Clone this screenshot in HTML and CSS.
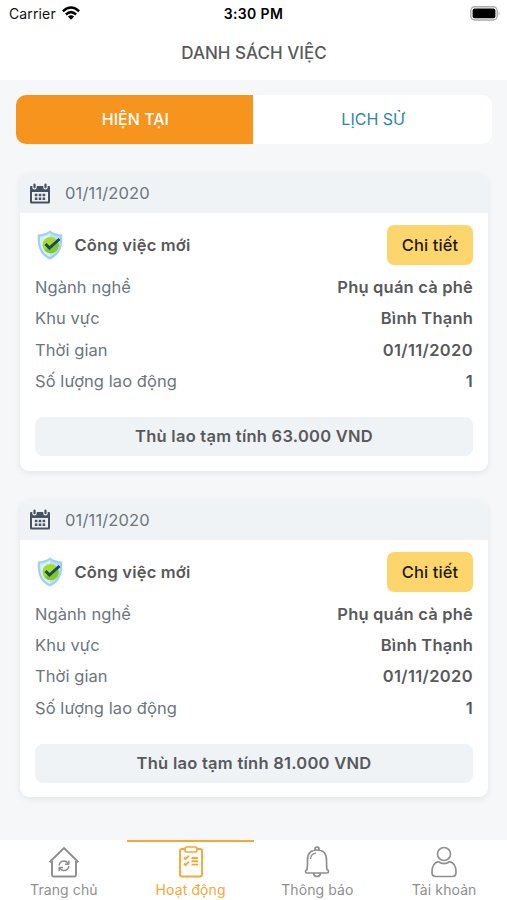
FILE: index.html
```html
<!DOCTYPE html>
<html lang="vi">
<head>
<meta charset="utf-8">
<meta name="viewport" content="width=device-width, initial-scale=1">
<title>Danh sách việc</title>
<link rel="stylesheet" href="styles.css">
</head>
<body>
<svg class="symbols" aria-hidden="true">
  <symbol id="calendar" viewBox="0 0 20 21">
    <path fill="#46525f" fill-rule="evenodd" d="M1 3H2.300V4.500Q2.300 6.500 4.500 6.500Q6.700 6.500 6.700 4.500V3H13.300V4.500Q13.300 6.500 15.500 6.500Q17.700 6.500 17.700 4.500V3H19Q20 3 20 4V19Q20 20.500 18.500 20.500H1.500Q0 20.500 0 19V4Q0 3 1 3ZM2 9V18.500H18V9Z"/>
    <path stroke="#46525f" stroke-width="2.200" stroke-linecap="round" d="M4.500 1.500V4.200M15.500 1.500V4.200"/>
    <path stroke="#46525f" stroke-width="2.600" stroke-dasharray="2.600 1.300" d="M4.800 12H15.200M4.800 15.800H15.200"/>
  </symbol>
  <symbol id="shield" viewBox="0 0 26 30">
    <path fill="#9bd2f5" d="M13 .5C10 3 5.500 4.300 .800 4.500C.200 15 2 25 13 29.500C24 25 25.800 15 25.200 4.500C20.500 4.300 16 3 13 .5Z"/>
    <path fill="#d9effb" d="M13 3C10 5.200 6.500 6.300 3 6.500C2.700 15 4 23 13 27Z"/>
    <path fill="#bce2f7" d="M13 3C16 5.200 19.500 6.300 23 6.500C23.300 15 22 23 13 27Z"/>
    <circle cx="13.500" cy="15" r="8" fill="#a5dc2c"/>
    <path fill="#86c625" d="M20.500 11A8 8 0 0 1 7.500 20.300Z"/>
    <path fill="none" stroke="#164a63" stroke-width="3" d="M8.500 14L12.500 18L22.500 9"/>
  </symbol>
</svg>
<div class="screen">
  <header class="top">
    <div class="status">
      <div class="carrier"><span>Carrier</span>
        <svg width="18" height="14" viewBox="0 0 18 14" fill="none" stroke="#000" stroke-width="2.500"><path d="M.900 5.300Q9-2.300 17.100 5.300M3.900 8.500Q9 3.800 14.100 8.500"/><path fill="#000" stroke="none" d="M5.900 10.600Q9 8 12.100 10.600L9 13.800Z"/></svg>
      </div>
      <div class="clock">3:30 PM</div>
      <svg class="battery" width="31" height="15" viewBox="0 0 31 15"><rect x=".8" y=".8" width="26.400" height="13.200" rx="4" fill="#fff" stroke="#aaa" stroke-width="1.400"/><rect x="2.600" y="2.600" width="22.800" height="9.600" rx="2" fill="#000"/><path d="M28.600 5Q30.500 7.400 28.600 9.800Z" fill="#aaa"/></svg>
    </div>
    <h1><span>DANH SÁCH VIỆC</span></h1>
  </header>
  <main>
    <div class="tabs"><div class="tab active"><span>HIỆN TẠI</span></div><div class="tab"><span>LỊCH SỬ</span></div></div>
    <article class="card">
      <div class="date"><svg width="20" height="21"><use href="#calendar"/></svg><span>01/11/2020</span></div>
      <div class="body">
        <div class="title"><svg width="26" height="30"><use href="#shield"/></svg><strong>Công việc mới</strong><button>Chi tiết</button></div>
        <dl>
          <div><dt>Ngành nghề</dt><dd>Phụ quán cà phê</dd></div>
          <div><dt>Khu vực</dt><dd>Bình Thạnh</dd></div>
          <div><dt>Thời gian</dt><dd class="digits">01/11/2020</dd></div>
          <div><dt>Số lượng lao động</dt><dd>1</dd></div>
        </dl>
        <div class="pay"><span>Thù lao tạm tính 63.000 VND</span></div>
      </div>
    </article>
    <article class="card">
      <div class="date"><svg width="20" height="21"><use href="#calendar"/></svg><span>01/11/2020</span></div>
      <div class="body">
        <div class="title"><svg width="26" height="30"><use href="#shield"/></svg><strong>Công việc mới</strong><button>Chi tiết</button></div>
        <dl>
          <div><dt>Ngành nghề</dt><dd>Phụ quán cà phê</dd></div>
          <div><dt>Khu vực</dt><dd>Bình Thạnh</dd></div>
          <div><dt>Thời gian</dt><dd class="digits">01/11/2020</dd></div>
          <div><dt>Số lượng lao động</dt><dd>1</dd></div>
        </dl>
        <div class="pay"><span>Thù lao tạm tính 81.000 VND</span></div>
      </div>
    </article>
  </main>
  <nav>
    <div class="item">
      <svg width="32" height="32" viewBox="0 0 32 32"><path stroke-width="1.900" d="M4 15V29Q4 30.500 5.500 30.500H26.500Q28 30.500 28 29V15M1.500 16.300L16 2L30.500 16.300"/><path d="M11 19.500Q12 15 16 15Q19 15 20.500 18M20.800 14.500V18.300H17M21 20Q20 24.500 16 24.500Q13 24.500 11.500 21.800M11.200 25.300V21.500H15"/></svg>
      <span>Trang chủ</span>
    </div>
    <div class="item active">
      <svg width="32" height="32" viewBox="0 0 32 32"><path stroke-width="1.900" d="M10 3H7Q5 3 5 5V28.500Q5 30.500 7 30.500H25Q27 30.500 27 28.500V5Q27 3 25 3H22"/><rect x="10" y="1" width="12" height="5" rx="1.500" stroke-width="1.700"/><path stroke-width="1.900" d="M9 11.500L10.500 13.200L13.800 9.700M9 17.500L10.500 19.200L13.800 15.700M16.500 12H23M16.500 15.300H23M16.500 18.600H23"/></svg>
      <span>Hoạt động</span>
    </div>
    <div class="item">
      <svg width="32" height="32" viewBox="0 0 32 32"><path stroke-width="1.700" d="M14 4V2.800Q14 1.200 16 1.200Q18 1.200 18 2.800V4M6 23.500Q6.500 21 6.500 14Q6.500 4 16 4Q25.500 4 25.500 14Q25.500 21 26 23.500Q27.500 24 27.500 25.500Q27.500 27 26 27H6Q4.500 27 4.500 25.500Q4.500 24 6 23.500ZM12.500 27.300Q13 30.500 16 30.500Q19 30.500 19.500 27.300"/><path stroke-width="1.200" d="M9.500 13Q10 7.700 15 7.200"/></svg>
      <span>Thông báo</span>
    </div>
    <div class="item">
      <svg width="32" height="32" viewBox="0 0 32 32"><circle cx="16" cy="8" r="6.500" stroke-width="1.700"/><path stroke-width="1.700" d="M10.500 15.700Q4 17 4 26.500Q4 30.500 8 30.500H24Q28 30.500 28 26.500Q28 17 21.500 15.700Q16 19.500 10.500 15.700Z"/></svg>
      <span>Tài khoản</span>
    </div>
  </nav>
</div>
</body>
</html>
```
FILE: styles.css
```css
* { box-sizing: border-box; }
body { margin: 0; font-family: Inter, "Liberation Sans", sans-serif; font-size: 16.5px; color: #58595b; background: #f5f7f9; white-space: nowrap; }
.symbols { display: none; }
.screen { height: 900px; display: flex; flex-direction: column; overflow: hidden; }
.top { height: 80px; background: #fff; flex: none; }
.status { height: 27px; display: grid; grid-template-columns: 1fr auto 1fr; align-items: center; padding: 0 6px 0 9px; color: #111; font-size: 14px; }
.carrier { display: flex; align-items: center; gap: 6px; letter-spacing: .13px; }
.carrier svg { margin-top: -2px; }
.clock { font-weight: 600; color: #000; font-size: 14px; letter-spacing: .35px; margin-right: 3px; }
.battery { justify-self: end; }
h1 { margin: 0; height: 52px; display: flex; align-items: center; justify-content: center; font-size: 17px; font-weight: 500; letter-spacing: .03px; padding-left: 1px; }
main { flex: 1; min-height: 0; padding: 15px 15px 0; }
.tabs { display: flex; height: 49px; margin: 0 0 29px .5px; border-radius: 10px; overflow: hidden; background: #fff; font-size: 16px; padding-right: 1px; }
.tab { flex: 1; display: flex; align-items: center; justify-content: center; color: #2c87aa; padding: 0 0 1px 2px; }
.tab.active { background: #f7941d; color: #fff; font-weight: 500; }
.card { width: 468px; margin: 0 0 29px 5px; border-radius: 9px; box-shadow: 0 2px 6px rgba(60, 80, 90, .09); overflow: hidden; background: #fff; }
.date { height: 40px; display: flex; align-items: center; gap: 15px; padding-left: 10px; background: #eff3f6; color: #6d767d; letter-spacing: .15px; }
.body { height: 257.500px; padding: 12px 15px 14.500px; display: flex; flex-direction: column; }
.title { height: 40px; display: flex; align-items: center; }
strong { margin-left: 11.500px; font-weight: 600; letter-spacing: .2px; }
.title svg { margin-left: 2px; }
button { margin-left: auto; width: 86px; height: 40px; padding: 0; border: 0; border-radius: 7px; background: #fdd56d; color: #1e1a10; font: 500 16.5px Inter, sans-serif; letter-spacing: .1px; }
dl { margin: 6.400px 0 0; }
dl div { height: 31.4px; display: flex; align-items: center; justify-content: space-between; }
dt { color: #6d767d; letter-spacing: .07px; }
dd { margin: 0; font-weight: 600; letter-spacing: .2px; }
.digits { letter-spacing: .36px; }
.pay { margin-top: auto; height: 39px; display: flex; align-items: center; justify-content: center; border-radius: 8px; background: #eff3f6; font-weight: 600; letter-spacing: .26px; padding-bottom: 1px; }
nav { flex: none; height: 60px; display: grid; grid-template-columns: repeat(4, 1fr); background: #fff; }
.item { display: flex; flex-direction: column; align-items: center; padding: 4px 0 0 1px; border-top: 2px solid transparent; color: #8f8f8f; font-size: 14px; line-height: 18px; letter-spacing: .1px; }
.item svg { flex: none; fill: none; stroke: currentColor; stroke-width: 1.4; stroke-linejoin: round; }
.item span { margin-top: 3px; }
.item.active { color: #faa634; border-color: #faa634; }
```
